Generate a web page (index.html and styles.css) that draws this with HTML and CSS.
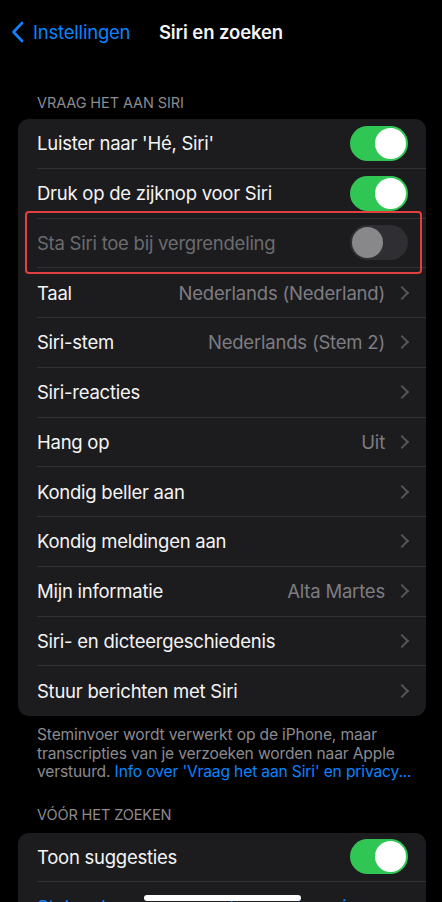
FILE: index.html
```html
<!DOCTYPE html>
<html lang="nl">
<head>
  <meta charset="UTF-8" />
  <meta name="viewport" content="width=device-width, initial-scale=1" />
  <title>Siri en zoeken</title>
  <link rel="stylesheet" href="styles.css">
</head>
<body>

  <header class="nav">
    <a class="back" href="#">
      <svg width="13" height="22" viewBox="0 0 13 22"><path d="M11 2 L2.5 11 L11 20" fill="none" stroke="#0a84ff" stroke-width="2.6" stroke-linecap="round" stroke-linejoin="round"/></svg>
      <span>Instellingen</span>
    </a>
    <h1>Siri en zoeken</h1>
    <span></span>
  </header>

  <div class="section-title">VRAAG HET AAN SIRI</div>
  <div class="card">
    <div class="row"><div class="row-inner">
      <span class="label">Luister naar 'Hé, Siri'</span>
      <span class="toggle on"></span>
    </div></div>
    <div class="row"><div class="row-inner">
      <span class="label">Druk op de zijknop voor Siri</span>
      <span class="toggle on"></span>
    </div></div>
    <div class="row highlighted"><div class="row-inner">
      <span class="label disabled">Sta Siri toe bij vergrendeling</span>
      <span class="toggle off"></span>
    </div></div>
    <div class="row"><div class="row-inner">
      <span class="label">Taal</span>
      <span class="value">Nederlands (Nederland)</span>
      <span class="chev"></span>
    </div></div>
    <div class="row"><div class="row-inner">
      <span class="label">Siri-stem</span>
      <span class="value">Nederlands (Stem 2)</span>
      <span class="chev"></span>
    </div></div>
    <div class="row"><div class="row-inner">
      <span class="label">Siri-reacties</span>
      <span class="chev"></span>
    </div></div>
    <div class="row"><div class="row-inner">
      <span class="label">Hang op</span>
      <span class="value">Uit</span>
      <span class="chev"></span>
    </div></div>
    <div class="row"><div class="row-inner">
      <span class="label">Kondig beller aan</span>
      <span class="chev"></span>
    </div></div>
    <div class="row"><div class="row-inner">
      <span class="label">Kondig meldingen aan</span>
      <span class="chev"></span>
    </div></div>
    <div class="row"><div class="row-inner">
      <span class="label">Mijn informatie</span>
      <span class="value">Alta Martes</span>
      <span class="chev"></span>
    </div></div>
    <div class="row"><div class="row-inner">
      <span class="label">Siri- en dicteergeschiedenis</span>
      <span class="chev"></span>
    </div></div>
    <div class="row"><div class="row-inner">
      <span class="label">Stuur berichten met Siri</span>
      <span class="chev"></span>
    </div></div>
  </div>
  <p class="footnote">Steminvoer wordt verwerkt op de iPhone, maar<br>transcripties van je verzoeken worden naar Apple<br>verstuurd. <a href="#">Info over 'Vraag het aan Siri' en privacy...</a></p>

  <div class="section-title second">VÓÓR HET ZOEKEN</div>
  <div class="card">
    <div class="row"><div class="row-inner">
      <span class="label">Toon suggesties</span>
      <span class="toggle on"></span>
    </div></div>
    <div class="row"><div class="row-inner">
      <span class="label link">Stel verborgen suggesties opnieuw in</span>
    </div></div>
  </div>

  <div class="home-bar"></div>

</body>
</html>
```

FILE: styles.css
```css
body {
  margin: 0;
  width: 442px;
  height: 902px;
  overflow: hidden;
  background: #000;
  color: #f4f4f5;
  font-family: 'Inter', 'Noto Sans', sans-serif;
}

/* NAV BAR */
.nav {
  height: 64px;
  display: grid;
  grid-template-columns: 1fr auto 1fr;
  align-items: center;
}
.back {
  display: flex;
  align-items: center;
  gap: 9px;
  padding-left: 11px;
  color: #0a84ff;
  text-decoration: none;
  font-size: 18.5px;
  letter-spacing: -0.2px;
}
.nav h1 {
  margin: 0;
  font-size: 18.5px;
  font-weight: 600;
  letter-spacing: -0.1px;
}

/* SECTIONS */
.section-title {
  padding: 30px 37px 7px;
  font-size: 14.5px;
  line-height: 18px;
  color: #8b8b90;
  letter-spacing: -0.1px;
}
.section-title.second {
  padding-top: 24px;
  padding-bottom: 9px;
}
.card {
  margin: 0 16px 0 18px;
  background: #1c1c1e;
  border-radius: 11px;
}
.row {
  position: relative;
  height: 49.75px;
  padding-left: 19px;
}
.row-inner {
  height: 100%;
  display: flex;
  align-items: center;
  padding-right: 18px;
  border-bottom: 1px solid #323234;
  box-sizing: border-box;
}
.row:last-child .row-inner {
  border-bottom: none;
}
.label {
  flex: 1;
  font-size: 18.5px;
  letter-spacing: -0.25px;
  white-space: nowrap;
}
.label.disabled {
  color: #6b6b6f;
}
.label.link {
  color: #0a84ff;
}
.value {
  font-size: 18.5px;
  letter-spacing: -0.2px;
  color: #7d7d82;
  margin-right: 12px;
}
.chev {
  width: 8px;
  height: 8px;
  border-top: 2px solid #56565a;
  border-right: 2px solid #56565a;
  transform: rotate(45deg);
  margin-right: 1px;
}

/* TOGGLES */
.toggle {
  position: relative;
  width: 58px;
  height: 35px;
  border-radius: 18px;
  background: #2f2f33;
}
.toggle::after {
  content: "";
  position: absolute;
  top: 2px;
  width: 31px;
  height: 31px;
  border-radius: 50%;
}
.toggle.on {
  background: #30c653;
}
.toggle.on::after {
  right: 2px;
  background: #fff;
}
.toggle.off::after {
  left: 2px;
  background: #88888b;
}

/* red highlight round the locked row */
.highlighted::after {
  content: "";
  position: absolute;
  left: 7px;
  right: 4px;
  top: -8px;
  bottom: -6px;
  border: 2px solid #e2403f;
  border-radius: 4px;
}

.footnote {
  margin: 0;
  padding: 10px 20px 0 37px;
  font-size: 15.6px;
  line-height: 18.5px;
  color: #8b8b90;
  letter-spacing: -0.15px;
  white-space: nowrap;
}
.footnote a {
  color: #0a84ff;
  text-decoration: none;
}

.home-bar {
  position: fixed;
  left: 144px;
  bottom: 1px;
  width: 157px;
  height: 6px;
  border-radius: 3px;
  background: #fff;
}
```
